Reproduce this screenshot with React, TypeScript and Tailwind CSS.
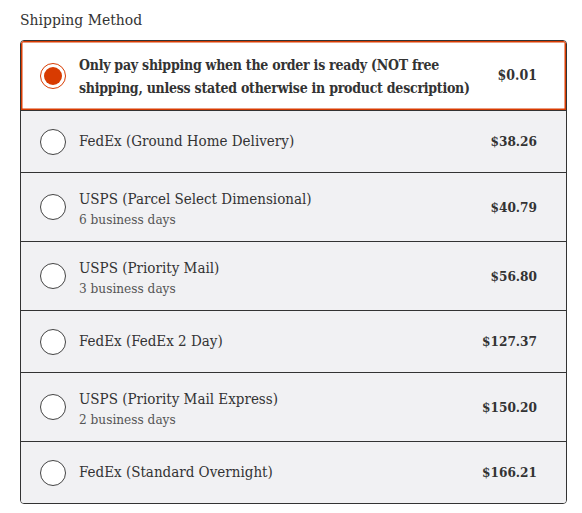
type Option = {
  name: string;
  days?: string;
  price: string;
};

const options: Option[] = [
  { name: "FedEx (Ground Home Delivery)", price: "$38.26" },
  { name: "USPS (Parcel Select Dimensional)", days: "6 business days", price: "$40.79" },
  { name: "USPS (Priority Mail)", days: "3 business days", price: "$56.80" },
  { name: "FedEx (FedEx 2 Day)", price: "$127.37" },
  { name: "USPS (Priority Mail Express)", days: "2 business days", price: "$150.20" },
  { name: "FedEx (Standard Overnight)", price: "$166.21" },
];

function Radio({ checked }: { checked?: boolean }) {
  if (checked) {
    return (
      <span className="flex h-[26px] w-[26px] shrink-0 items-center justify-center rounded-full border-[1.5px] border-[#d83b01] bg-white">
        <span className="h-[18px] w-[18px] rounded-full bg-[#d83b01]" />
      </span>
    );
  }
  return <span className="h-[26px] w-[26px] shrink-0 rounded-full border-[1.5px] border-[#444] bg-white" />;
}

export default function App() {
  return (
    <div className="min-h-screen bg-white font-['DejaVu_Serif_Condensed','DejaVu_Serif',serif] text-[#333]">
      <div className="px-5 pt-[9px] text-[15.5px] leading-[22px]">Shipping Method</div>

      <div className="mx-5 mt-[9px] w-[547px] overflow-hidden rounded-[4px] border border-[#333]">
        {/* selected */}
        <label className="flex h-[69px] items-center gap-[13px] bg-white pl-[19px] pr-[29px] shadow-[inset_0_0_0_1.5px_#d83b01]">
          <Radio checked />
          <span className="flex-1 pt-[3px] text-[14px] font-bold leading-[23px] tracking-[-0.25px]">
            Only pay shipping when the order is ready (NOT free shipping, unless stated otherwise in product description)
          </span>
          <span className="shrink-0 text-[14px] font-bold">$0.01</span>
        </label>

        {options.map((o) => (
          <label
            key={o.name}
            className={`flex items-center gap-[13px] border-t border-[#333] bg-[#f1f1f3] pl-[19px] pr-[29px] ${
              o.days ? "h-[69px]" : "h-[62px]"
            }`}
          >
            <Radio />
            <span className={`flex flex-1 flex-col ${o.days ? "pt-[3px]" : ""}`}>
              <span className="text-[15px] leading-[21px]">{o.name}</span>
              {o.days && <span className="text-[13.5px] leading-[19px] text-[#555]">{o.days}</span>}
            </span>
            <span className="text-[13.5px] font-bold">{o.price}</span>
          </label>
        ))}
      </div>
    </div>
  );
}
